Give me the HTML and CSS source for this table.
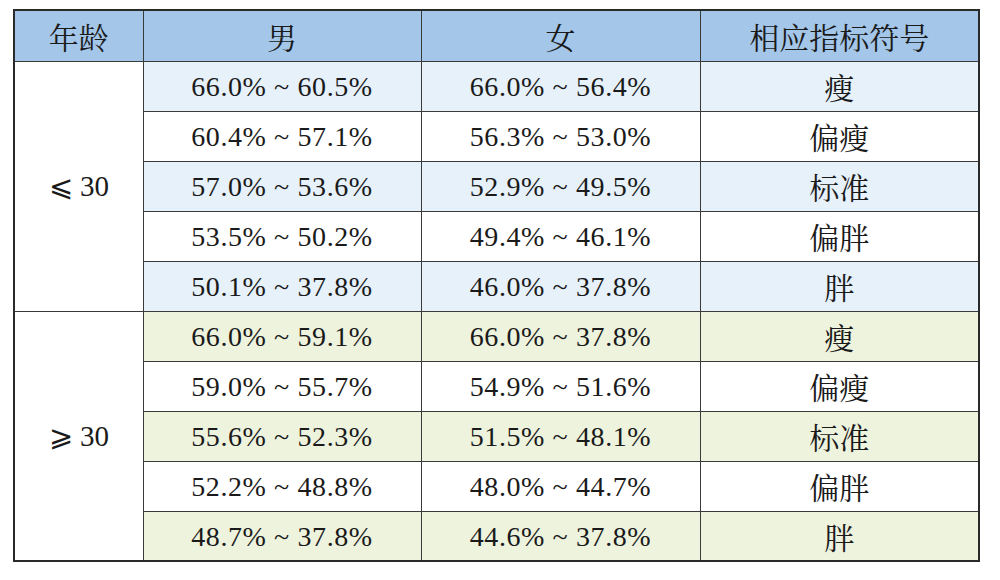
FILE: index.html
```html
<!DOCTYPE html>
<html>
<head>
<meta charset="utf-8">
<link rel="stylesheet" href="styles.css">
</head>
<body>
<table class="tbl">
  <colgroup>
    <col class="c-age"><col class="c-m"><col class="c-f"><col class="c-s">
  </colgroup>
  <thead>
    <tr><th>年龄</th><th>男</th><th>女</th><th>相应指标符号</th></tr>
  </thead>
  <tbody>
    <tr class="b"><td class="age" rowspan="5">⩽ 30</td><td class="num">66.0% ~ 60.5%</td><td class="num">66.0% ~ 56.4%</td><td class="cn">瘦</td></tr>
    <tr><td class="num">60.4% ~ 57.1%</td><td class="num">56.3% ~ 53.0%</td><td class="cn">偏瘦</td></tr>
    <tr class="b"><td class="num">57.0% ~ 53.6%</td><td class="num">52.9% ~ 49.5%</td><td class="cn">标准</td></tr>
    <tr><td class="num">53.5% ~ 50.2%</td><td class="num">49.4% ~ 46.1%</td><td class="cn">偏胖</td></tr>
    <tr class="b"><td class="num">50.1% ~ 37.8%</td><td class="num">46.0% ~ 37.8%</td><td class="cn">胖</td></tr>
    <tr class="g"><td class="age" rowspan="5">⩾ 30</td><td class="num">66.0% ~ 59.1%</td><td class="num">66.0% ~ 37.8%</td><td class="cn">瘦</td></tr>
    <tr><td class="num">59.0% ~ 55.7%</td><td class="num">54.9% ~ 51.6%</td><td class="cn">偏瘦</td></tr>
    <tr class="g"><td class="num">55.6% ~ 52.3%</td><td class="num">51.5% ~ 48.1%</td><td class="cn">标准</td></tr>
    <tr><td class="num">52.2% ~ 48.8%</td><td class="num">48.0% ~ 44.7%</td><td class="cn">偏胖</td></tr>
    <tr class="g"><td class="num">48.7% ~ 37.8%</td><td class="num">44.6% ~ 37.8%</td><td class="cn">胖</td></tr>
  </tbody>
</table>
</body>
</html>
```
FILE: styles.css
```css
html, body { margin: 0; padding: 0; background: #ffffff; }
body { padding: 9px 0 0 13px; }
.tbl {
  border-collapse: collapse;
  width: 965px;
  table-layout: fixed;
  color: #1a1a1a;
  border: 2px solid #2a2a2a;
}
.c-age { width: 129px; }
.c-m { width: 278px; }
.c-f { width: 279px; }
.c-s { width: 279px; }
.tbl th, .tbl td {
  border: 1px solid #3a3a3a;
  text-align: center;
  padding: 0;
  height: 50px;
  line-height: 30px;
  font-weight: normal;
  box-sizing: border-box;
}
.tbl th {
  background: #a3c6e9;
  height: 51px;
  font-family: "Noto Serif CJK SC", serif;
  font-size: 30px;
}
.tbl td.num {
  font-family: "Liberation Serif", "Times New Roman", serif;
  font-size: 28px;
  letter-spacing: 0.6px;
  padding-top: 2px;
}
.tbl td.cn {
  font-family: "Noto Serif CJK SC", serif;
  font-size: 30px;
}
.tbl td.age {
  background: #ffffff;
  font-family: "Liberation Serif", "DejaVu Serif", serif;
  font-size: 29px;
}
.b td { background: #e6f1fa; }
.g td { background: #eef3de; }
.b td.age, .g td.age { background: #ffffff; }
```
